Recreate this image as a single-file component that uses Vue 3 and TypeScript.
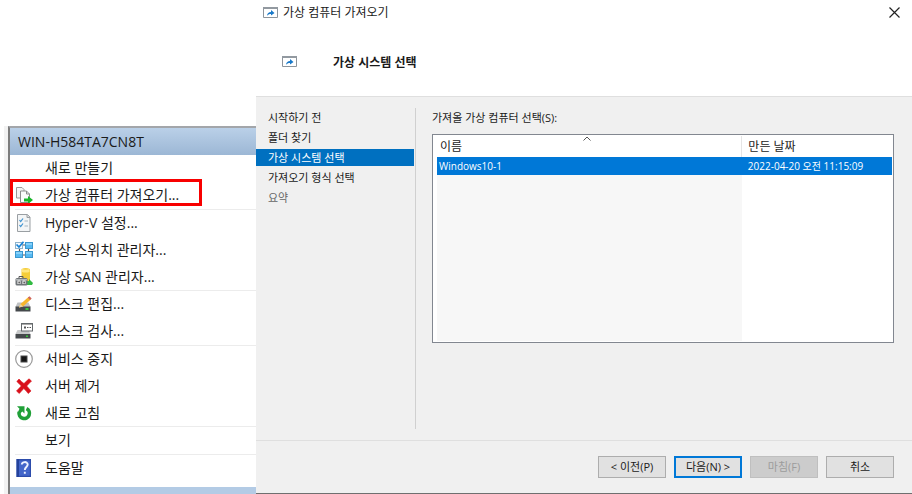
<script setup lang="ts">
import { ref } from 'vue'

interface Action {
  label: string
  icon?: string
  marked?: boolean
}

const groups: Action[][] = [
  [{ label: '새로 만들기' }, { label: '가상 컴퓨터 가져오기...', icon: 'import', marked: true }],
  [
    { label: 'Hyper-V 설정...', icon: 'settings' },
    { label: '가상 스위치 관리자...', icon: 'switch' },
    { label: '가상 SAN 관리자...', icon: 'san' },
  ],
  [
    { label: '디스크 편집...', icon: 'edit' },
    { label: '디스크 검사...', icon: 'inspect' },
  ],
  [
    { label: '서비스 중지', icon: 'stop' },
    { label: '서버 제거', icon: 'remove' },
    { label: '새로 고침', icon: 'refresh' },
  ],
  [{ label: '보기' }],
  [{ label: '도움말', icon: 'help' }],
]

const steps = ['시작하기 전', '폴더 찾기', '가상 시스템 선택', '가져오기 형식 선택', '요약']
const current = 2

const machines = [{ name: 'Windows10-1', created: '2022-04-20 오전 11:15:09' }]
const selected = ref(0)
</script>

<template>
  <div class="screen">
    <aside class="actions">
      <div class="panel">
        <h2 class="server">WIN-H584TA7CN8T</h2>
        <ul v-for="(group, g) in groups" :key="g" class="group">
          <li v-for="item in group" :key="item.label">
            <button type="button" class="action">
              <svg v-if="item.icon === 'import'" class="icon" viewBox="0 0 18 18" aria-hidden="true">
                <path d="M1.500 1.500h5.500l2 2v8.500h-7.500z" fill="#f4f4f4" stroke="#999" />
                <path d="M5.500 5h6l3 3v8.500h-9z" fill="#fafafa" stroke="#8c8c8c" />
                <path d="M11.500 5v3h3" fill="none" stroke="#8c8c8c" />
                <path d="M9 12.500h4v-2.500l5 4-5 4v-2.500H9z" fill="#19b52b" />
              </svg>
              <svg v-else-if="item.icon === 'settings'" class="icon" viewBox="0 0 18 18" aria-hidden="true">
                <path d="M2.500 .5h10l2.500 2.500v14.500H2.500z" fill="#f3f5f6" stroke="#9a9fa3" />
                <path d="M12 .5v3h3" fill="#ddd" stroke="#9a9fa3" />
                <path d="M4.500 6l1.200 1.500L8 4.500M4.500 11l1.200 1.500L8 9.500" fill="none" stroke="#3c91cf" stroke-width="1.200" />
                <path d="M9.500 7h3.500M9.500 12h3.500" stroke="#a5b5c0" />
              </svg>
              <svg v-else-if="item.icon === 'switch'" class="icon" viewBox="0 0 18 18" aria-hidden="true">
                <path d="M4.500 7v4M13.500 7v4M8 4h3M8 14h3" stroke="#555" stroke-width="1.200" />
                <rect x=".5" y="1.500" width="7" height="6" fill="#f4faff" stroke="#8fb2c9" />
                <path d="M1.500 3.500l2.500 2.500L8.500 .8" fill="none" stroke="#1683d8" stroke-width="1.700" />
                <rect x="10.500" y="1.500" width="7" height="6" fill="#56b9f2" stroke="#3a97cf" />
                <rect x=".5" y="10.500" width="7" height="6" fill="#56b9f2" stroke="#3a97cf" />
                <rect x="10.500" y="10.500" width="7" height="6" fill="#56b9f2" stroke="#3a97cf" />
                <path d="M11 2h6v2h-6zM1 11h6v2H1zM11 11h6v2h-6z" fill="#86d1fa" />
              </svg>
              <svg v-else-if="item.icon === 'san'" class="icon" viewBox="0 0 18 18" aria-hidden="true">
                <path d="M6.500 1q4-2 8.500 0v14h-8.500z" fill="#f5cd39" />
                <path d="M7 1q3.500 1.500 7.500 0v3q-4 1-7.500 0z" fill="#ffe781" />
                <path d="M11 13h3v-2l4 4-1 2h-6z" fill="#31ba42" />
                <path d="M4 10V8.500h4V10" fill="none" stroke="#555" />
                <rect x=".5" y="10" width="12" height="7.500" rx="1.500" fill="#707578" />
                <path d="M1 11h11v1.500H1z" fill="#b4b8ba" />
                <path d="M2.500 12.500h3v3.500h-3zM7.500 12.500h3v3.500h-3z" fill="#fff" />
                <path d="M3.500 13.500h1.200v2H3.500zM8.500 13.500h1.200v2H8.500z" fill="#222" />
              </svg>
              <svg v-else-if="item.icon === 'edit'" class="icon" viewBox="0 0 18 18" aria-hidden="true">
                <path d="M2.500 7.500h11l2 4.500H.5z" fill="#bfc1c3" />
                <path d="M.5 11.500h15v5H.5z" fill="#45494c" />
                <path d="M10.500 13h3v2h-3z" fill="#39c53d" />
                <path d="M4 12.500l1.500-3.500L13.500 2l2.300 2.500L8 11.500z" fill="#f6b62c" />
                <path d="M12.800 2.600L14.500 1.200l2.200 2.200L15 5z" fill="#cf655e" />
                <path d="M4 12.500l1.500-3.500L8 11.500z" fill="#ead4a7" />
              </svg>
              <svg v-else-if="item.icon === 'inspect'" class="icon" viewBox="0 0 18 18" aria-hidden="true">
                <path d="M2.500 8h11l2 4H.5z" fill="#c7c9ca" />
                <path d="M.5 12h15v4.500H.5z" fill="#45494c" />
                <path d="M11 13.500h2V15h-2z" fill="#39c53d" />
                <rect x="6.500" y="1.500" width="11" height="7.500" fill="#fff" stroke="#64696c" />
                <path d="M7 2h10v1H7z" fill="#aaa" />
                <path d="M9 4.500h2v2H9z" fill="#555" />
                <path d="M12 5.500h1.500M14.500 5.500H16" stroke="#555" />
              </svg>
              <svg v-else-if="item.icon === 'stop'" class="icon" viewBox="0 0 18 18" aria-hidden="true">
                <circle cx="9" cy="9" r="8.300" fill="#fff" stroke="#999" stroke-width="1.200" />
                <path d="M5.500 5.500h7v7h-7z" fill="#4a4a4a" />
                <path d="M6.500 6.500h5v5h-5z" fill="#151515" />
              </svg>
              <svg v-else-if="item.icon === 'remove'" class="icon" viewBox="0 0 18 18" aria-hidden="true">
                <path d="M4 2q2.500 3 5 4.500Q11.500 4 14 1.800L16.500 4Q14 6.500 11.700 9q2.300 2.500 4.300 5l-2.800 2.500Q11 13.500 8.800 11.600 6.500 14 4.300 16.500L1.500 14q2.300-2.500 4.800-5Q4 6.500 1.800 4.500z" fill="#d9101b" stroke="#d9101b" stroke-width=".6" />
              </svg>
              <svg v-else-if="item.icon === 'refresh'" class="icon" viewBox="0 0 18 18" aria-hidden="true">
                <path d="M11.500 4.600a5.200 5.200 0 1 1-7.300 3.400" fill="none" stroke="#20a038" stroke-width="3.600" />
                <path d="M2 2.200h7.500v7.300L7.300 7.500 5.500 9.200H2.400L4.500 4.800z" fill="#20a038" />
              </svg>
              <svg v-else-if="item.icon === 'help'" class="icon" viewBox="0 0 18 18" aria-hidden="true">
                <path d="M1.500 0H16v18H1.500z" fill="#4366ca" />
                <path d="M1.500 0H4v18H1.500z" fill="#24429b" />
                <path d="M4 0h12v1.500H4zM14.800 0H16v18h-1.200zM4 16.700h12V18H4z" fill="#2c4cab" />
                <path d="M6.800 5.600c0-3.300 5.900-3.400 5.900-.1 0 2.400-2.900 2.600-2.900 5.500M9.800 12.800v2" fill="none" stroke="#eef3ff" stroke-width="1.900" />
              </svg>
              <span v-else class="icon"></span>
              <span>{{ item.label }}</span>
              <span v-if="item.marked" class="marker"></span>
            </button>
          </li>
        </ul>
        <div class="next-section"></div>
      </div>
    </aside>

    <main class="dialog">
      <header class="head">
        <div class="titlebar">
          <svg class="app-icon" viewBox="0 0 15 11" aria-hidden="true">
            <path d="M.5 .5h14v10H.5z" fill="#fff" stroke="#8d949b" />
            <path d="M0 0h15v2H0z" fill="#9299a0" />
            <path d="M4 9c.3-3 1.800-4 4-4V3l3.500 3L8 8.500V7C6.200 7 5 7.600 4 9z" fill="#1979c9" />
          </svg>
          <span>가상 컴퓨터 가져오기</span>
          <button type="button" class="close" aria-label="닫기">
            <svg viewBox="0 0 11 11" aria-hidden="true"><path d="M.5 .5l10 10M10.500 .5l-10 10" stroke="#222" stroke-width="1.200" /></svg>
          </button>
        </div>
        <div class="heading">
          <svg class="app-icon" viewBox="0 0 15 11" aria-hidden="true">
            <path d="M.5 .5h14v10H.5z" fill="#fff" stroke="#8d949b" />
            <path d="M0 0h15v2H0z" fill="#9299a0" />
            <path d="M4 9c.3-3 1.800-4 4-4V3l3.500 3L8 8.500V7C6.200 7 5 7.600 4 9z" fill="#1979c9" />
          </svg>
          <h1>가상 시스템 선택</h1>
        </div>
      </header>

      <div class="body">
        <ol class="steps">
          <li v-for="(step, i) in steps" :key="step">
            <a href="#" :class="{ active: i === current, later: i === steps.length - 1 }">{{ step }}</a>
          </li>
        </ol>
        <section class="content">
          <p id="list-label" class="label">가져올 가상 컴퓨터 선택(S):</p>
          <div class="list">
            <table aria-labelledby="list-label">
              <thead>
                <tr>
                  <th class="name">
                    이름
                    <svg class="sort" viewBox="0 0 8 5" aria-hidden="true"><path d="M.5 4.500L4 1l3.500 3.500" fill="none" stroke="#555" /></svg>
                  </th>
                  <th>만든 날짜</th>
                </tr>
              </thead>
              <tbody>
                <tr v-for="(vm, i) in machines" :key="vm.name" class="vm" :class="{ selected: i === selected }" @click="selected = i">
                  <td>{{ vm.name }}</td>
                  <td class="date">{{ vm.created }}</td>
                </tr>
                <tr class="rest">
                  <td class="sorted"></td>
                  <td></td>
                </tr>
              </tbody>
            </table>
          </div>
        </section>
      </div>

      <footer class="foot">
        <button type="button">&lt; 이전(P)</button>
        <button type="button" class="primary">다음(N) &gt;</button>
        <button type="button" disabled>마침(F)</button>
        <button type="button">취소</button>
      </footer>
    </main>
  </div>
</template>

<style>
body {
  margin: 0;
  background: #fff;
}
</style>

<style scoped>
.screen {
  display: grid;
  grid-template-columns: 256px 1fr;
  min-height: 100vh;
  font-family: "Open Sans", "Noto Sans CJK KR", sans-serif;
  color: #1a1a1a;
}
.screen *,
.screen {
  box-sizing: border-box;
}
button {
  font: inherit;
  color: inherit;
}
.actions {
  display: flex;
  padding: 126px 0 0 4px;
}
.panel {
  flex: 1;
  display: flex;
  flex-direction: column;
  border-left: 2px solid #7c7c7c;
  border-top: 2px solid #a3a6aa;
  box-shadow: -4px 0 0 #f2f2f2;
  margin-left: 4px;
}
.server {
  margin: 0;
  height: 27px;
  padding-left: 8px;
  font-size: 14px;
  font-weight: 400;
  line-height: 27px;
  background: linear-gradient(#bad0e8, #9cb7d5);
}
.group {
  list-style: none;
  margin: 0 0 0 5px;
  padding: 0;
  border-bottom: 1px solid #ececec;
}
.group:last-of-type {
  border-bottom: 0;
}
.group li:nth-child(3) {
  margin-bottom: -1px;
}
.action {
  position: relative;
  display: flex;
  align-items: center;
  gap: 12px;
  width: 100%;
  height: 27px;
  padding: 0 0 2px;
  border: 0;
  background: none;
  font-size: 14px;
  line-height: 20px;
  text-align: left;
}
.icon {
  width: 18px;
  height: 18px;
}
.marker {
  position: absolute;
  left: -5px;
  top: -3px;
  width: 192px;
  height: 27px;
  border: 3px solid #f80000;
  pointer-events: none;
}
.next-section {
  height: 7px;
  margin-top: auto;
  background: #b3cbe5;
}
.dialog {
  display: flex;
  flex-direction: column;
  background: #f0f0f0;
  border-bottom: 1px solid #6f6f6f;
  font-size: 11px;
}
.head {
  height: 97px;
  background: #fff;
  border-bottom: 1px solid #dfdfdf;
}
.titlebar {
  display: flex;
  align-items: center;
  gap: 5px;
  height: 24px;
  padding: 0 12px 0 7px;
  font-size: 12px;
}
.app-icon {
  width: 15px;
  height: 11px;
}
.close {
  display: flex;
  margin-left: auto;
  padding: 0;
  border: 0;
  background: none;
}
.close svg {
  width: 11px;
  height: 11px;
}
.heading {
  display: flex;
  align-items: center;
  gap: 36px;
  height: 75px;
  padding-left: 26px;
}
h1 {
  margin: 0;
  font-size: 12px;
  font-weight: 700;
}
.body {
  flex: 1;
  display: flex;
  padding: 11px 18px 11px 0;
}
.steps {
  display: flex;
  flex-direction: column;
  gap: 3px;
  width: 160px;
  margin: 0;
  padding: 1px 1px 0 0;
  list-style: none;
  border-right: 1px solid #d0d0d0;
}
.steps a {
  display: block;
  padding-left: 12px;
  line-height: 17px;
  color: inherit;
  text-decoration: none;
}
.steps a.active {
  background: #0070c0;
  color: #fff;
}
.steps a.later {
  color: #666;
}
.content {
  flex: 1;
  display: flex;
  flex-direction: column;
  padding-left: 16px;
}
.label {
  margin: 0;
  padding-bottom: 6px;
  line-height: 20px;
}
.list {
  display: flex;
  height: 209px;
  padding: 1px 1px 1px 4px;
  border: 1px solid #828790;
  background: #fff;
}
table {
  flex: 1;
  height: 100%;
  border-collapse: collapse;
  table-layout: fixed;
}
th {
  position: relative;
  height: 21px;
  padding: 0 0 0 6px;
  font-size: 12px;
  font-weight: 400;
  line-height: 18px;
  text-align: left;
}
th.name {
  width: 67%;
  padding-left: 3px;
  border-right: 1px solid #e5e5e5;
}
.sort {
  position: absolute;
  left: 48%;
  top: 0;
  width: 8px;
  height: 5px;
}
.vm td {
  height: 18px;
  padding: 0 0 0 2px;
  font-size: 10px;
  line-height: 16px;
}
.vm .date {
  padding-left: 6px;
}
.vm.selected {
  background: #0078d7;
  color: #fff;
}
.rest td {
  padding: 0;
}
.sorted {
  background: #f7f7f7;
}
.foot {
  display: flex;
  justify-content: flex-end;
  gap: 8px;
  padding: 15px 18px;
  border-top: 1px solid #dfdfdf;
}
.foot button {
  width: 68px;
  height: 22px;
  padding: 0;
  border: 1px solid #adadad;
  background: #e1e1e1;
  line-height: 18px;
}
.foot .primary {
  border: 2px solid #0078d7;
}
.foot button:disabled {
  background: #ccc;
  border-color: #bfbfbf;
  color: #9c9c9c;
}
</style>
